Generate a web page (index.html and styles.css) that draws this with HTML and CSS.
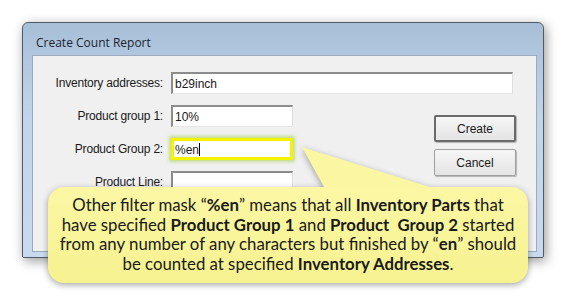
FILE: index.html
```html
<!doctype html>
<html lang="en">
  <head>
    <meta charset="UTF-8" />
    <title>Create Count Report</title>
    <link rel="stylesheet" href="styles.css">
  </head>
  <body>
    <div class="stage">
      <!-- Dialog window -->
      <div class="window">
        <div class="titlebar">Create Count Report</div>
        <div class="client">
          <div class="row">
            <label class="label">Inventory addresses:</label>
            <div class="field wide">b29inch</div>
          </div>

          <div class="lower">
            <div class="fields">
              <div class="row">
                <label class="label">Product group 1:</label>
                <div class="field">10%</div>
              </div>
              <div class="row">
                <label class="label">Product Group 2:</label>
                <div class="field is-marked">%en<span class="caret"></span></div>
              </div>
              <div class="row">
                <label class="label">Product Line:</label>
                <div class="field"></div>
              </div>
            </div>

            <div class="buttons">
              <button class="btn btn-default">Create</button>
              <button class="btn">Cancel</button>
            </div>
          </div>
        </div>
      </div>

      <!-- Callout -->
      <div class="callout">
        <svg class="pointer" width="145" height="44" viewBox="0 0 145 44">
          <polygon points="4,1 27,43 138,43" fill="#faf6a2" />
        </svg>
        <div class="callout-body">
          <p>Other filter mask &ldquo;<b>%en</b>&rdquo; means that all <b>Inventory Parts</b> that<br>
            have specified <b>Product Group 1</b> and <b>Product&nbsp; Group 2</b> started<br>
            from any number of any characters but finished by &ldquo;<b>en</b>&rdquo; should<br>
            be counted at specified <b>Inventory Addresses</b>.</p>
        </div>
      </div>
    </div>
  </body>
</html>
```

FILE: styles.css
```css
body {
  margin: 0;
  background: #ffffff;
}

.stage {
  position: relative;
  width: 568px;
  height: 295px;
  overflow: hidden;
}

.window {
  margin: 22px 0 0 22px;
  width: 522px;
  height: 236px;
  box-sizing: border-box;
  border: 1px solid #4e5a66;
  border-radius: 6px 6px 2px 2px;
  background: linear-gradient(#a8bfd8, #c1d4ea 40%, #c9daee);
  box-shadow: 2px 3px 12px rgba(0, 0, 0, 0.4);
  padding: 0 6px 5px 9px;
  display: flex;
  flex-direction: column;
}

.titlebar {
  height: 32px;
  line-height: 40px;
  padding-left: 4px;
  font-family: "Open Sans", sans-serif;
  font-size: 12px;
  color: #1b2430;
}

.client {
  flex: 1;
  background: #f0f0f0;
  border: 1px solid #9aabbf;
  padding: 16px 0 0 0;
  font-family: "Liberation Sans", Arial, sans-serif;
  font-size: 12px;
  color: #1a1a1a;
}

.row {
  display: flex;
  align-items: center;
  height: 22px;
  margin-bottom: 11px;
}

.label {
  width: 130px;
  text-align: right;
  margin-right: 8px;
  letter-spacing: -0.2px;
}

.field {
  width: 122px;
  height: 22px;
  box-sizing: border-box;
  background: #ffffff;
  border-style: solid;
  border-width: 2px 1px 1px 2px;
  border-color: #8c8c8c #dedede #e6e6e6 #8c8c8c;
  padding: 3px 0 0 2px;
  line-height: 15px;
}

.field.wide {
  width: 342px;
}

.field.is-marked {
  border: 3px solid #f4f400;
  padding: 2px 0 0 1px;
  box-shadow: 0 0 3px 2px rgba(160, 205, 60, 0.55);
}

.caret {
  display: inline-block;
  width: 1px;
  height: 13px;
  background: #000;
  vertical-align: -2px;
}

.lower {
  display: flex;
}

.buttons {
  margin-left: auto;
  margin-right: 20px;
  padding-top: 10px;
  display: flex;
  flex-direction: column;
  gap: 7px;
}

.btn {
  width: 82px;
  height: 27px;
  font-family: "Liberation Sans", Arial, sans-serif;
  font-size: 12px;
  color: #1a1a1a;
  background: linear-gradient(#f6f6f6, #e4e4e4);
  border: 1px solid #a0a0a0;
  border-radius: 2px;
  box-shadow: 1px 1px 1px rgba(0, 0, 0, 0.25);
  padding: 0;
}

.btn-default {
  border: 2px solid #6a6a6a;
}

/* Callout bubble */
.callout {
  position: absolute;
  left: 48px;
  top: 187px;
  width: 480px;
  height: 96px;
  filter: drop-shadow(0 2px 3px rgba(0, 0, 0, 0.35));
}

.pointer {
  position: absolute;
  left: 250px;
  top: -41px;
}

.callout-body {
  height: 100%;
  box-sizing: border-box;
  border-radius: 16px;
  background: linear-gradient(#fbf7a4, #f6f290);
  padding-top: 8px;
}

.callout-body p {
  margin: 0;
  text-align: center;
  font-family: Lato, "Noto Sans", sans-serif;
  font-size: 16.8px;
  line-height: 19.5px;
  color: #1a1a1a;
}
```
